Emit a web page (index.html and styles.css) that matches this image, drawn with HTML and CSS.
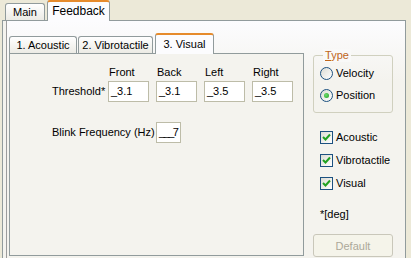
FILE: index.html
```html
<!DOCTYPE html>
<html lang="en">
<head>
    <meta charset="UTF-8">
    <title>Feedback</title>
    <link rel="stylesheet" href="styles.css">
</head>
<body>
    <div class="window">
        <!-- outer tabs -->
        <div class="tabs outer-tabs">
            <div class="tab tab-main">Main</div>
            <div class="tab tab-feedback active">Feedback</div>
        </div>

        <div class="page outer-page">
            <div class="inner">
                <!-- inner tabs -->
                <div class="tabs inner-tabs">
                    <div class="tab tab-acoustic">1. Acoustic</div>
                    <div class="tab tab-vibro">2. Vibrotactile</div>
                    <div class="tab tab-visual active">3. Visual</div>
                </div>

                <div class="page inner-page">
                    <div class="heads">
                        <span class="head">Front</span>
                        <span class="head">Back</span>
                        <span class="head">Left</span>
                        <span class="head">Right</span>
                    </div>
                    <div class="row threshold-row">
                        <span class="label label-threshold">Threshold*</span>
                        <div class="field">_3.1</div>
                        <div class="field">_3.1</div>
                        <div class="field">_3.5</div>
                        <div class="field">_3.5</div>
                    </div>
                    <div class="row blink-row">
                        <span class="label label-blink">Blink Frequency (Hz)</span>
                        <div class="field field-small"><span class="pad">___</span>7</div>
                    </div>
                </div>
            </div>

            <div class="side">
                <div class="group">
                    <div class="legend"><u>T</u>ype</div>
                    <div class="option"><span class="radio"></span>Velocity</div>
                    <div class="option"><span class="radio checked"></span>Position</div>
                </div>

                <div class="checks">
                    <div class="check-row"><span class="check"><svg width="11" height="11" viewBox="0 0 11 11"><path d="M2 5 L4.5 7.5 L9 2.5" fill="none" stroke="#21a121" stroke-width="2"/></svg></span>Acoustic</div>
                    <div class="check-row"><span class="check"><svg width="11" height="11" viewBox="0 0 11 11"><path d="M2 5 L4.5 7.5 L9 2.5" fill="none" stroke="#21a121" stroke-width="2"/></svg></span>Vibrotactile</div>
                    <div class="check-row"><span class="check"><svg width="11" height="11" viewBox="0 0 11 11"><path d="M2 5 L4.5 7.5 L9 2.5" fill="none" stroke="#21a121" stroke-width="2"/></svg></span>Visual</div>
                </div>

                <div class="unit">*[deg]</div>

                <button class="btn" disabled>Default</button>
            </div>
        </div>
    </div>
</body>
</html>
```

FILE: styles.css
```css
* {
    margin: 0;
    padding: 0;
    box-sizing: border-box;
}

body {
    width: 411px;
    height: 258px;
    overflow: hidden;
    background: #ece9d8;
    font-family: "Liberation Sans", Arial, sans-serif;
    font-size: 11px;
    line-height: 13px;
    color: #000;
}

.window {
    padding-left: 2px;
    width: 406px;
}

/* tabs */
.tabs {
    display: flex;
    align-items: flex-end;
}

.tab {
    border: 1px solid #919b9c;
    border-bottom: none;
    border-radius: 3px 3px 0 0;
    background: linear-gradient(#ffffff, #ecebe5);
    text-align: center;
    padding-top: 2px;
}

.tab.active {
    background: #fcfcfe;
    border-top: 2px solid #e68b2c;
    margin-bottom: -1px;
    position: relative;
    padding-top: 3px;
}

.outer-tabs {
    height: 20px;
    padding-left: 3px;
}

.tab-main {
    width: 40px;
    height: 17px;
}

.tab-feedback {
    width: 63px;
    height: 21px;
    margin-left: 2px;
    font-size: 12px;
}

.page {
    border: 1px solid #919b9c;
}

.outer-page {
    display: flex;
    align-items: flex-start;
    height: 250px;
    padding: 12px 0 0 6px;
    background: linear-gradient(#fcfcfe, #f4f3ee 60px);
    box-shadow: inset 3px 0 0 #f4f3ee, inset 4px 0 0 #9c9c9c;
}

/* inner tab control */
.inner {
    width: 295px;
}

.inner-tabs {
    height: 20px;
}

.tab-acoustic {
    width: 68px;
    height: 17px;
}

.tab-vibro {
    width: 75px;
    height: 17px;
    margin-left: 1px;
}

.tab-visual {
    width: 59px;
    height: 21px;
    margin-left: 2px;
}

.inner-page {
    height: 203px;
    background: #f4f3ee;
    padding: 12px 0 0 42px;
}

.heads {
    display: flex;
    padding-left: 57px;
    height: 13px;
    margin-bottom: 2px;
}

.head {
    width: 48px;
}

.row {
    display: flex;
    align-items: center;
}

.label-threshold {
    width: 56px;
}

.label-blink {
    width: 104px;
}

.blink-row {
    margin-top: 20px;
}

.field {
    width: 41px;
    height: 21px;
    margin-right: 7px;
    border: 1px solid #bdbca8;
    background: #ffffff;
    padding: 3px 0 0 2px;
    white-space: nowrap;
    overflow: hidden;
}

.field-small {
    width: 25px;
}

.field-small .pad {
    letter-spacing: -1.5px;
}

/* right column */
.side {
    width: 80px;
    margin-left: 9px;
}

.group {
    margin-top: 22px;
    height: 58px;
    border: 1px solid #d0d0bf;
    border-radius: 3px;
    padding: 0 0 0 6px;
}

.legend {
    width: fit-content;
    margin: -7px 0 0 3px;
    padding: 0 2px;
    background: #f9f9f8;
    color: #c0661a;
}

.legend u {
    text-decoration: underline;
}

.option {
    display: flex;
    align-items: center;
    height: 22px;
}

.option:first-of-type {
    margin-top: 3px;
}

.radio {
    width: 13px;
    height: 13px;
    border: 1px solid #1c5180;
    border-radius: 50%;
    background: linear-gradient(135deg, #dcdcd4, #ffffff);
    margin-right: 3px;
    display: flex;
    align-items: center;
    justify-content: center;
}

.radio.checked::after {
    content: "";
    width: 5px;
    height: 5px;
    border-radius: 50%;
    background: radial-gradient(circle at 40% 40%, #6fdc6f, #21a121);
}

.checks {
    margin-top: 13px;
    padding-left: 7px;
}

.check-row {
    display: flex;
    align-items: center;
    height: 23px;
}

.check {
    width: 13px;
    height: 13px;
    border: 1px solid #1c5180;
    background: linear-gradient(135deg, #dcdcd4, #ffffff);
    margin-right: 3px;
    display: flex;
    align-items: center;
    justify-content: center;
}

.unit {
    margin: 13px 0 0 7px;
}

.btn {
    display: block;
    width: 80px;
    height: 23px;
    margin-top: 13px;
    border: 1px solid #c9c7ba;
    border-radius: 3px;
    background: #f5f4ea;
    color: #aca899;
    font-family: "Liberation Sans", Arial, sans-serif;
    font-size: 11px;
}
```
